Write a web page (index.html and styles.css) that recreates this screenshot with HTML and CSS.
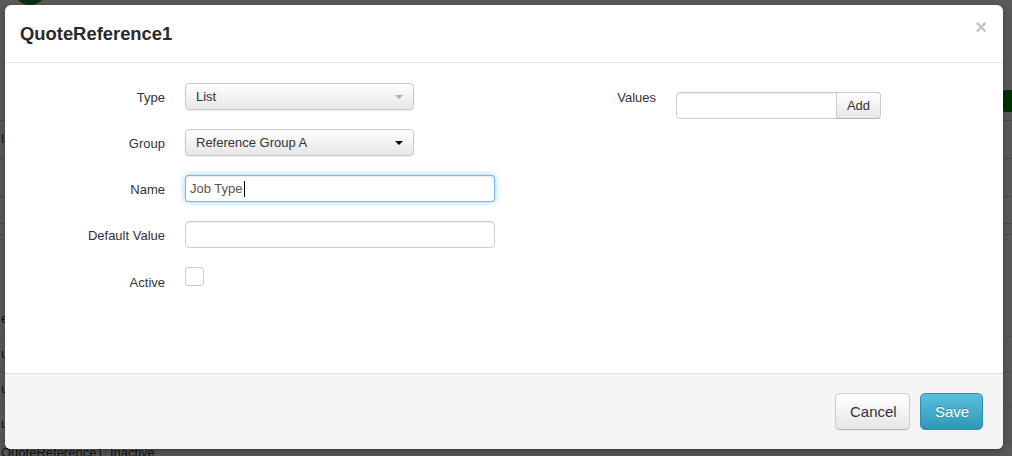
FILE: index.html
```html
<!DOCTYPE html>
<html>
<head>
<meta charset="utf-8">
<link rel="stylesheet" href="styles.css">
</head>
<body>
<div class="page">
  <div class="page-top"><span class="avatar"></span></div>
  <div class="page-lines">
    <div class="line"><span class="red">ls</span></div>
    <div class="line l2"></div>
    <div class="line l3"></div>
    <div class="line l4"></div>
    <div class="line l5"></div>
  </div>
  <div class="page-list">
    <div class="list-row">e</div>
    <div class="list-row">u</div>
    <div class="list-row">u</div>
    <div class="list-row">u</div>
    <div class="list-row last"><span class="cell-name">QuoteReference1</span><span class="cell-status">Inactive</span></div>
  </div>
  <span class="green-btn"></span>
</div>
<div class="backdrop"></div>

<div class="modal">
  <div class="modal-header">
    <h3 class="modal-title">QuoteReference1</h3>
    <span class="close">&times;</span>
  </div>
  <div class="modal-body">
    <div class="form-left">
      <label class="form-label">Type</label>
      <div class="select disabled"><span>List</span><span class="caret"></span></div>

      <label class="form-label">Group</label>
      <div class="select"><span>Reference Group A</span><span class="caret"></span></div>

      <label class="form-label">Name</label>
      <div class="input focused"><span>Job Type</span><span class="text-caret"></span></div>

      <label class="form-label">Default Value</label>
      <div class="input"></div>

      <label class="form-label label-active">Active</label>
      <div class="check-cell"><span class="checkbox"></span></div>
    </div>
    <div class="form-right">
      <label class="form-label">Values</label>
      <div class="input-append">
        <div class="input small"></div>
        <button class="btn-add">Add</button>
      </div>
    </div>
  </div>
  <div class="modal-footer">
    <button class="btn btn-default">Cancel</button>
    <button class="btn btn-info">Save</button>
  </div>
</div>
</body>
</html>
```
FILE: styles.css
```css
* { box-sizing: border-box; }

html, body {
  margin: 0;
  padding: 0;
}

body {
  width: 1012px;
  height: 456px;
  overflow: hidden;
  position: relative;
  font-family: "Liberation Sans", Arial, sans-serif;
  font-size: 13px;
  color: #333;
}

/* ---- page behind the modal ---- */
.page {
  height: 456px;
  overflow: hidden;
  background: #fff;
  position: relative;
}

.page-top {
  display: flow-root;
  height: 0;
}

.avatar {
  display: block;
  width: 34px;
  height: 34px;
  border-radius: 50%;
  background: #1f8a2e;
  margin: -29px 0 0 13px;
}

.page-lines {
  margin-top: 120px;
}

.line {
  height: 38px;
  border-top: 1px solid #d4d4d4;
  font-size: 13px;
  padding: 10px 0 0 1px;
}

.line.l3 { height: 27px; }
.line.l4 { height: 11px; }
.line.l5 { height: 29px; }

.red { color: #7a2a2a; }

.page-list {
  margin-top: 39px;
}

.list-row {
  height: 35px;
  border-bottom: 1px solid #e5e5e5;
  padding: 9px 0 0 1px;
  font-size: 13px;
}

.list-row.last {
  border-bottom: 0;
  display: flex;
  padding-top: 3px;
}

.cell-name {
  width: 105px;
  border-right: 1px solid #ddd;
}

.cell-status {
  padding-left: 4px;
}

.green-btn {
  position: absolute;
  right: -40px;
  top: 90px;
  width: 50px;
  height: 22px;
  background: #0a8a0a;
  border-radius: 4px;
}

.backdrop {
  position: absolute;
  inset: 0;
  background: rgba(0, 0, 0, 0.65);
}

/* ---- modal ---- */
.modal {
  position: absolute;
  left: 5px;
  top: 5px;
  width: 998px;
  height: 444px;
  background: #fff;
  border-radius: 6px;
  box-shadow: 0 3px 7px rgba(0, 0, 0, 0.3);
  display: flex;
  flex-direction: column;
  overflow: hidden;
}

.modal-header {
  height: 58px;
  flex: none;
  border-bottom: 1px solid #e5e5e5;
  display: flex;
  align-items: center;
  justify-content: space-between;
  padding: 0 16px 0 15px;
}

.modal-title {
  margin: 0;
  font-size: 18.4px;
  font-weight: bold;
  color: #2a2a2a;
  line-height: 20px;
}

.close {
  align-self: flex-start;
  margin-top: 12px;
  font-size: 20px;
  font-weight: bold;
  line-height: 20px;
  color: #c4c4c4;
}

.modal-body {
  flex: 1;
  display: flex;
  padding-top: 20px;
}

.form-left {
  width: 490px;
  display: grid;
  grid-template-columns: 160px 310px;
  column-gap: 20px;
  row-gap: 19px;
  align-items: center;
  align-content: start;
}

.form-label {
  text-align: right;
  font-size: 13px;
  color: #333;
  height: 27px;
  line-height: 25px;
  padding-top: 2px;
}

.label-active {
  align-self: start;
  margin-top: 1px;
}

.select {
  width: 229px;
  height: 27px;
  border: 1px solid #c8c8c8;
  border-radius: 4px;
  background: linear-gradient(#ffffff, #e6e6e6);
  box-shadow: inset 0 1px 0 rgba(255, 255, 255, 0.2), 0 1px 2px rgba(0, 0, 0, 0.08);
  padding: 0 10px 0 10px;
  display: flex;
  align-items: center;
  justify-content: space-between;
  font-size: 13px;
  color: #333;
}

.caret {
  width: 0;
  height: 0;
  border-left: 4px solid transparent;
  border-right: 4px solid transparent;
  border-top: 4px solid #000;
  margin-top: 1px;
}

.select.disabled .caret {
  border-top-color: #b0b0b0;
}

.input {
  width: 310px;
  height: 27px;
  border: 1px solid #ccc;
  border-radius: 4px;
  background: #fff;
  box-shadow: inset 0 1px 1px rgba(0, 0, 0, 0.075);
  padding: 0 4px;
  display: flex;
  align-items: center;
  font-size: 13px;
  color: #555;
}

.input.focused {
  border-color: rgba(82, 168, 236, 0.8);
  box-shadow: inset 0 1px 1px rgba(0, 0, 0, 0.075), 0 0 6px rgba(82, 168, 236, 0.6);
}

.text-caret {
  width: 1px;
  height: 16px;
  background: #000;
  margin-left: 1px;
}

.check-cell {
  align-self: start;
  height: 27px;
}

.checkbox {
  display: block;
  width: 19px;
  height: 19px;
  border: 1px solid #ccc;
  border-radius: 3px;
  background: #fff;
}

.form-right {
  display: grid;
  grid-template-columns: 161px auto;
  column-gap: 20px;
  align-items: start;
  align-content: start;
}

.input-append {
  display: flex;
  margin-top: 9px;
}

.input.small {
  width: 161px;
  border-radius: 4px 0 0 4px;
}

.btn-add {
  width: 45px;
  height: 27px;
  margin-left: -1px;
  border: 1px solid #ccc;
  border-bottom-color: #b3b3b3;
  border-radius: 0 4px 4px 0;
  background: linear-gradient(#ffffff, #e6e6e6);
  font-family: "Liberation Sans", Arial, sans-serif;
  font-size: 13px;
  color: #333;
  padding: 0;
}

.modal-footer {
  height: 76px;
  flex: none;
  border-top: 1px solid #ddd;
  background: #f5f5f5;
  display: flex;
  justify-content: flex-end;
  align-items: flex-start;
  gap: 10px;
  padding: 19px 20px 0;
}

.btn {
  height: 37px;
  padding: 0 14px;
  border-radius: 5px;
  font-family: "Liberation Sans", Arial, sans-serif;
  font-size: 15px;
  line-height: 20px;
}

.btn-default {
  width: 75px;
  border: 1px solid #ccc;
  border-bottom-color: #b3b3b3;
  background: linear-gradient(#ffffff, #e6e6e6);
  color: #333;
  box-shadow: inset 0 1px 0 rgba(255, 255, 255, 0.2), 0 1px 2px rgba(0, 0, 0, 0.05);
}

.btn-info {
  width: 63px;
  border: 1px solid #2f8fae;
  background: linear-gradient(#5bc0de, #2f96b4);
  color: #fff;
  text-shadow: 0 -1px 0 rgba(0, 0, 0, 0.25);
}
```
